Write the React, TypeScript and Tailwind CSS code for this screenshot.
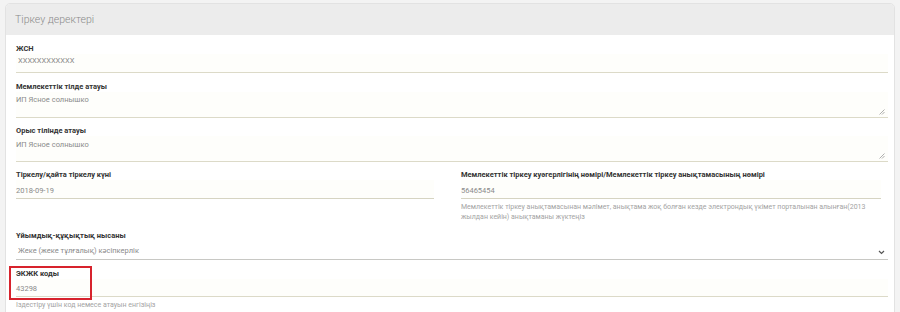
import React from "react";

const Resize = () => (
  <svg className="absolute right-[3px] bottom-[2px]" width="6" height="6" viewBox="0 0 6 6">
    <line x1="0.5" y1="5.5" x2="5.5" y2="0.5" stroke="#9a9a9a" strokeWidth="0.8" />
    <line x1="3" y1="5.5" x2="5.5" y2="3" stroke="#9a9a9a" strokeWidth="0.8" />
  </svg>
);

export default function App() {
  return (
    <div
      className="w-[900px] h-[312px] bg-[#f3f3f3] overflow-hidden pt-[3px] pl-[5px]"
      style={{ fontFamily: "Roboto, 'Noto Sans', sans-serif" }}
    >
      <div className="w-[890px] h-[330px] bg-white rounded-[5px] border border-[#e2e2e2] overflow-hidden">
        <div className="h-[31px] bg-[#ececec] flex items-center px-[9px] text-[10.5px] font-light text-[#8a8a8a]">
          Тіркеу деректері
        </div>
        <div className="pl-[10px] pr-[6px]">
          {/* ЖСН */}
          <div className="mt-[9px]">
            <div className="text-[7.5px] leading-[10px] font-bold text-[#333]">ЖСН</div>
            <div className="h-[19px] pt-[2px] pl-[2px] border-b border-[#dcdac8] bg-[#fefefb] text-[7.5px] leading-[10px] text-[#8a8a8a]">
              XXXXXXXXXXXX
            </div>
          </div>
          {/* Мемлекеттік тілде атауы */}
          <div className="mt-[9px]">
            <div className="text-[7.5px] leading-[10px] font-bold text-[#333]">Мемлекеттік тілде атауы</div>
            <div className="relative h-[26px] pt-[3px] border-b border-[#dcdac8] bg-[#fefefb] text-[7.5px] leading-[10px] text-[#8a8a8a]">
              ИП Ясное солнышко
              <Resize />
            </div>
          </div>
          {/* Орыс тілінде атауы */}
          <div className="mt-[8px]">
            <div className="text-[7.5px] leading-[10px] font-bold text-[#333]">Орыс тілінде атауы</div>
            <div className="relative h-[26px] pt-[4px] border-b border-[#dcdac8] bg-[#fefefb] text-[7.5px] leading-[10px] text-[#8a8a8a]">
              ИП Ясное солнышко
              <Resize />
            </div>
          </div>
          {/* Row */}
          <div className="mt-[8px] flex gap-[27px]">
            <div className="w-[418px]">
              <div className="text-[7.5px] leading-[10px] font-bold text-[#333]">Тіркелу/қайта тіркелу күні</div>
              <div className="h-[19px] pt-[6px] border-b border-[#d6d4c2] bg-[#fefefb] text-[7.5px] leading-[10px] text-[#8a8a8a]">
                2018-09-19
              </div>
            </div>
            <div className="w-[420px]">
              <div className="text-[7.5px] leading-[10px] font-bold text-[#333] whitespace-nowrap">
                Мемлекеттік тіркеу куәгерлігінің нөмірі/Мемлекеттік тіркеу анықтамасының нөмірі
              </div>
              <div className="h-[19px] pt-[6px] border-b border-[#d6d4c2] bg-[#fefefb] text-[7.5px] leading-[10px] text-[#8a8a8a]">
                56465454
              </div>
              <div className="mt-[3px] text-[7px] leading-[10px] text-[#a3a3a3]">
                Мемлекеттік тіркеу анықтамасынан мәлімет, анықтама жоқ болған кезде электрондық үкімет порталынан алынған(2013 жылдан кейін) анықтаманы жүктеңіз
              </div>
            </div>
          </div>
          {/* Ұйымдық-құқықтық нысаны */}
          <div className="mt-[9px]">
            <div className="text-[7.5px] leading-[10px] font-bold text-[#333]">Ұйымдық-құқықтық нысаны</div>
            <div className="relative h-[19px] pt-[5px] pl-[2px] border-b border-[#c8c8c4] text-[7.5px] leading-[10px] text-[#8a8a8a]">
              Жеке (жеке тұлғалық) кәсіпкерлік
              <svg className="absolute right-[3px] top-[9px]" width="7" height="5" viewBox="0 0 7 5">
                <polyline points="1,1 3.5,3.5 6,1" fill="none" stroke="#555" strokeWidth="1.2" />
              </svg>
            </div>
          </div>
          {/* ЭКЖК коды */}
          <div className="mt-[9px] relative">
            <div className="text-[7.5px] leading-[10px] font-bold text-[#333]">ЭКЖК коды</div>
            <div className="h-[18px] pt-[5px] border-b border-[#dcdac8] bg-[#fefefb] text-[7.5px] leading-[10px] text-[#8a8a8a]">
              43298
            </div>
            <div className="mt-[3px] text-[7px] leading-[10px] text-[#a3a3a3]">
              Іздестіру үшін код немесе атауын енгізіңіз
            </div>
            <div className="absolute left-[-7px] top-[-3px] w-[83px] h-[34px] border-2 border-[#d7232d]" />
          </div>
        </div>
      </div>
    </div>
  );
}
